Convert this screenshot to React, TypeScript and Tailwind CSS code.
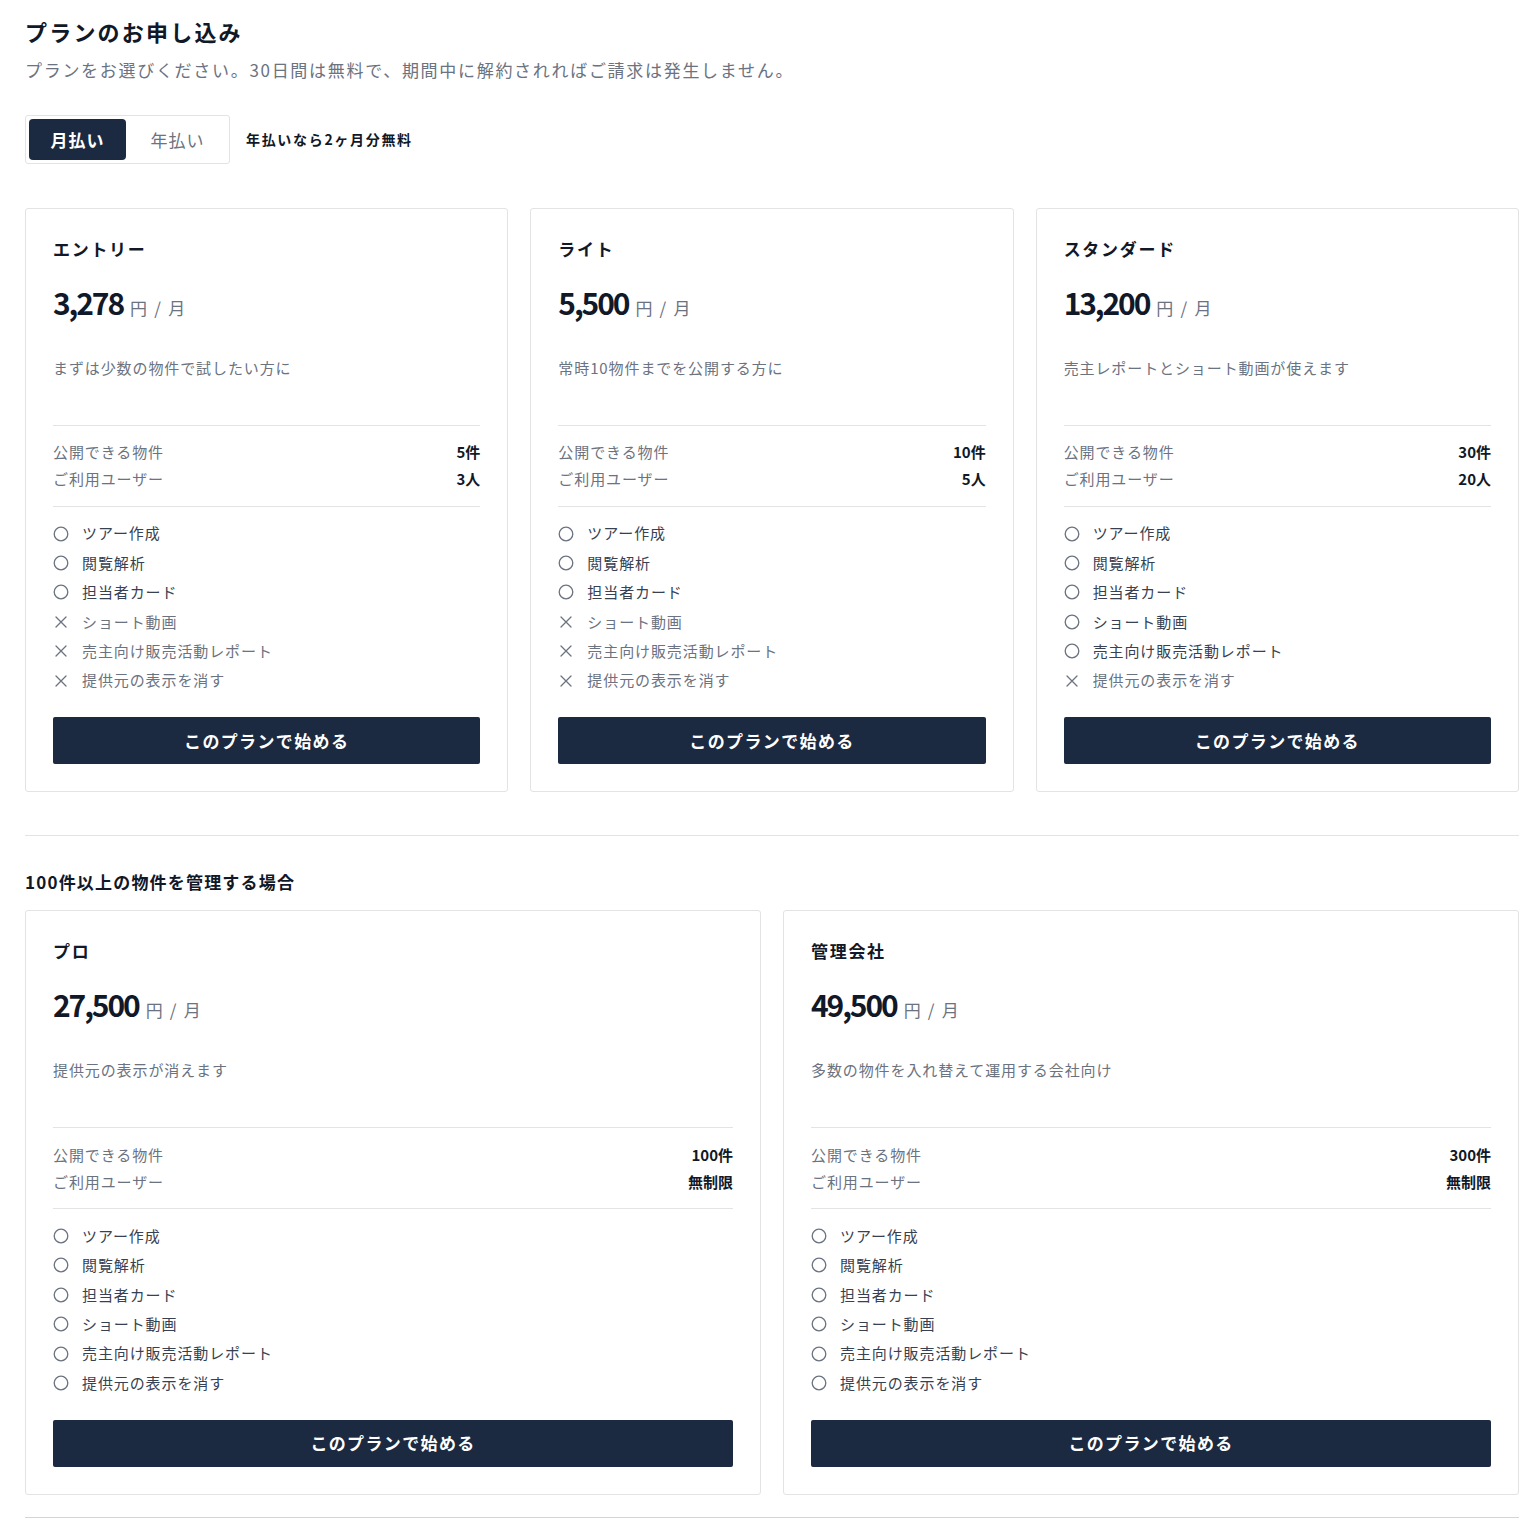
import { useState } from "react";

type Plan = {
  name: string;
  price: string;
  description: string;
  listings: string;
  users: string;
  included: boolean[];
};

const FEATURES = [
  "ツアー作成",
  "閲覧解析",
  "担当者カード",
  "ショート動画",
  "売主向け販売活動レポート",
  "提供元の表示を消す",
];

const BASIC_PLANS: Plan[] = [
  {
    name: "エントリー",
    price: "3,278",
    description: "まずは少数の物件で試したい方に",
    listings: "5件",
    users: "3人",
    included: [true, true, true, false, false, false],
  },
  {
    name: "ライト",
    price: "5,500",
    description: "常時10物件までを公開する方に",
    listings: "10件",
    users: "5人",
    included: [true, true, true, false, false, false],
  },
  {
    name: "スタンダード",
    price: "13,200",
    description: "売主レポートとショート動画が使えます",
    listings: "30件",
    users: "20人",
    included: [true, true, true, true, true, false],
  },
];

const LARGE_PLANS: Plan[] = [
  {
    name: "プロ",
    price: "27,500",
    description: "提供元の表示が消えます",
    listings: "100件",
    users: "無制限",
    included: [true, true, true, true, true, true],
  },
  {
    name: "管理会社",
    price: "49,500",
    description: "多数の物件を入れ替えて運用する会社向け",
    listings: "300件",
    users: "無制限",
    included: [true, true, true, true, true, true],
  },
];

function CircleIcon() {
  return (
    <svg width="16" height="16" viewBox="0 0 16 16" className="shrink-0">
      <circle cx="8" cy="8" r="6.8" fill="none" stroke="#6b7280" strokeWidth="1.3" />
    </svg>
  );
}

function CrossIcon() {
  return (
    <svg width="16" height="16" viewBox="0 0 16 16" className="shrink-0">
      <path d="M3 3L13 13M13 3L3 13" stroke="#6b7280" strokeWidth="1.3" strokeLinecap="round" />
    </svg>
  );
}

function PlanCard({ plan }: { plan: Plan }) {
  return (
    <div className="border border-[#e3e3e3] rounded-[3px] bg-white px-[27px] pt-7 pb-[27px]">
      <h3 className="text-[17px] leading-6 font-bold tracking-[0.1em] text-[#111827]">{plan.name}</h3>
      <div className="mt-[23px] flex items-baseline gap-[7px] h-9">
        <span className="text-[30px] leading-9 font-bold tracking-[-0.07em] text-[#111827]">{plan.price}</span>
        <span className="text-[17px] text-[#6b7280] tracking-[0.1em]">円 / 月</span>
      </div>
      <p className="mt-[37px] h-[68px] text-[15px] leading-[22px] tracking-[0.06em] text-[#6b7280]">
        {plan.description}
      </p>
      <div className="border-t border-[#e3e3e3] py-[13px] text-[15px] tracking-[0.06em]">
        <div className="h-[27px] flex items-center justify-between">
          <span className="text-[#6b7280]">公開できる物件</span>
          <span className="font-bold text-[#111827] tracking-normal">{plan.listings}</span>
        </div>
        <div className="h-[27px] flex items-center justify-between">
          <span className="text-[#6b7280]">ご利用ユーザー</span>
          <span className="font-bold text-[#111827] tracking-normal">{plan.users}</span>
        </div>
      </div>
      <ul className="border-t border-[#e3e3e3] pt-[12px] text-[15px] tracking-[0.06em]">
        {FEATURES.map((f, i) => (
          <li key={f} className="h-[29.4px] flex items-center gap-[13px]">
            {plan.included[i] ? <CircleIcon /> : <CrossIcon />}
            <span className={plan.included[i] ? "text-[#374151]" : "text-[#6b7280]"}>{f}</span>
          </li>
        ))}
      </ul>
      <button className="mt-[22px] w-full h-[47px] rounded-[2px] bg-[#1b2a41] text-white text-[17px] font-bold tracking-[0.08em]">
        このプランで始める
      </button>
    </div>
  );
}

export default function App() {
  const [billing, setBilling] = useState<"monthly" | "yearly">("monthly");

  const tab = (active: boolean) =>
    active
      ? "w-[98px] h-[41px] rounded-[4px] bg-[#1b2a41] text-white text-[17px] font-bold tracking-[0.06em]"
      : "w-[98px] h-[41px] rounded-[4px] text-[#6b7280] text-[17px] tracking-[0.06em]";

  return (
    <div
      className="min-h-screen bg-white pl-[25px] pr-[21px] pt-4 text-[#111827]"
      style={{ fontFamily: '"Noto Sans CJK JP", "Noto Sans", sans-serif' }}
    >
      <h1 className="text-[22px] leading-[30px] font-bold tracking-[0.1em]">プランのお申し込み</h1>
      <p className="mt-[11px] text-[17px] leading-[26px] tracking-[0.1em] text-[#6b7280]">
        プランをお選びください。30日間は無料で、期間中に解約されればご請求は発生しません。
      </p>

      <div className="mt-8 flex items-center gap-4">
        <div className="flex items-center gap-[3px] border border-[#e3e3e3] rounded-[3px] p-[3px] w-[205px] h-[49px]">
          <button onClick={() => setBilling("monthly")} className={tab(billing === "monthly")}>
            月払い
          </button>
          <button onClick={() => setBilling("yearly")} className={tab(billing === "yearly")}>
            年払い
          </button>
        </div>
        <span className="text-[14px] font-bold tracking-[0.12em]">年払いなら2ヶ月分無料</span>
      </div>

      <div className="mt-[44px] grid grid-cols-3 gap-[22px]">
        {BASIC_PLANS.map((p) => (
          <PlanCard key={p.name} plan={p} />
        ))}
      </div>

      <div className="mt-[43px] border-t border-[#e3e3e3]" />

      <h2 className="mt-[34px] text-[17px] leading-6 font-bold tracking-[0.07em]">100件以上の物件を管理する場合</h2>

      <div className="mt-4 grid grid-cols-2 gap-[22px]">
        {LARGE_PLANS.map((p) => (
          <PlanCard key={p.name} plan={p} />
        ))}
      </div>

      <div className="mt-[22px] border-t border-[#d4d4d4]" />
    </div>
  );
}
